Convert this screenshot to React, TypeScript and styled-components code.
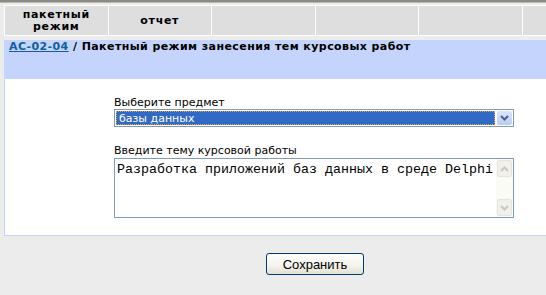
import React from 'react';
import styled, { createGlobalStyle } from 'styled-components';

const GlobalStyle = createGlobalStyle`
  html, body {
    margin: 0;
    padding: 0;
    background: #ececec;
    overflow: hidden;
  }
  body {
    font-family: "DejaVu Sans", Verdana, sans-serif;
    font-size: 11px;
    color: #000;
  }
`;

const Viewport = styled.div`
  width: 100%;
  height: 100vh;
  overflow: hidden;
`;

const Page = styled.div`
  width: 622px;
  padding-left: 4px;
`;

const TopStrip = styled.div`
  height: 4px;
  width: 630px;
  background: linear-gradient(#8b8a84 0, #8b8a84 2px, #b9b8b2 2px, #b9b8b2 3px, #ececec 3px);
`;

const Tabs = styled.div`
  margin-top: 1px;
  display: grid;
  grid-template-columns: repeat(6, 1fr);
  gap: 1px;
  padding: 1px;
  background: #fff;
`;

const Tab = styled.div`
  height: 29px;
  background: #dedede;
  display: flex;
  align-items: center;
  justify-content: center;
  text-align: center;
  font-weight: bold;
  font-size: 11px;
  line-height: 12px;
  letter-spacing: 0.7px;
  color: #000;
`;

const Panel = styled.div`
  margin-top: 4px;
  border: 1px solid #c4d4fc;
  border-top: none;
  background: #fff;
`;

const PanelHeader = styled.div`
  height: 39px;
  background: #c4d4fc;
  padding: 0 5px;
  margin-left: -1px;
  margin-right: -1px;
  font-weight: bold;
  line-height: 13px;
  letter-spacing: 0.42px;
`;

const Crumb = styled.a`
  color: #10609c;
  text-decoration: underline;
`;

const PanelBody = styled.div`
  padding: 17px 0 17px;
  display: flex;
  justify-content: center;
`;

const Form = styled.div`
  width: 400px;
  margin-left: -2px;
`;

const Label = styled.div<{ $gap?: number }>`
  line-height: 13px;
  margin-top: ${(p) => p.$gap ?? 0}px;
`;

const SelectBox = styled.div`
  height: 18px;
  box-sizing: border-box;
  border: 1px solid #7f9db9;
  display: flex;
  align-items: stretch;
  padding: 1px 1px 0 1px;
`;

const SelectValue = styled.div`
  flex: 1;
  margin-right: 2px;
  margin-bottom: 1px;
  background: #316ac5;
  color: #fff;
  line-height: 13px;
  padding-left: 2px;
  outline: 1px dotted #e8a030;
  outline-offset: -1px;
  border: 1px dotted #000;
`;

const DropButton = styled.div`
  width: 15px;
  margin-bottom: 1px;
  border-radius: 2px;
  background: linear-gradient(#dbe6fd, #b9cdf7);
  display: flex;
  align-items: center;
  justify-content: center;
`;

const TextBox = styled.div`
  margin-top: 1px;
  height: 60px;
  border: 1px solid #7f9db9;
  box-sizing: border-box;
  display: flex;
`;

const Area = styled.textarea`
  flex: 1;
  border: none;
  resize: none;
  outline: none;
  padding: 3px 2px;
  margin: 0;
  font-family: "Liberation Mono", "Courier New", monospace;
  font-size: 13.33px;
  line-height: 16px;
  color: #000;
  background: #fff;
  overflow: hidden;
`;

const ScrollBar = styled.div`
  width: 17px;
  background: #fbfbf6;
  display: flex;
  flex-direction: column;
  justify-content: space-between;
  padding: 1px 0;
`;

const ScrollBtn = styled.div`
  height: 15px;
  margin: 0 1px;
  border: 1px solid #e6e5dc;
  border-radius: 2px;
  background: #f1f0ea;
  display: flex;
  align-items: center;
  justify-content: center;
`;

const Actions = styled.div`
  display: flex;
  justify-content: center;
  padding-top: 17px;
`;

const SaveButton = styled.button`
  width: 98px;
  height: 22px;
  border: 1px solid #003c74;
  border-radius: 3px;
  background: linear-gradient(#ffffff, #f3f2ec 60%, #e3e0d4);
  font-family: "Liberation Sans", Arial, sans-serif;
  font-size: 13px;
  color: #000;
  padding: 0;
`;

const Chevron = ({ up, color }: { up?: boolean; color: string }) => (
  <svg width="9" height="6" viewBox="0 0 9 6">
    <path
      d={up ? 'M1 5 L4.5 1.5 L8 5' : 'M1 1 L4.5 4.5 L8 1'}
      fill="none"
      stroke={color}
      strokeWidth="2"
    />
  </svg>
);

export default function App() {
  return (
    <Viewport>
      <GlobalStyle />
      <TopStrip />
      <Page>
        <Tabs>
          <Tab>пакетный<br />режим</Tab>
          <Tab>отчет</Tab>
          <Tab />
          <Tab />
          <Tab />
          <Tab />
        </Tabs>
        <Panel>
          <PanelHeader>
            <Crumb href="#">АС-02-04</Crumb> / Пакетный режим занесения тем курсовых работ
          </PanelHeader>
          <PanelBody>
            <Form>
              <Label>Выберите предмет</Label>
              <SelectBox>
                <SelectValue>базы данных</SelectValue>
                <DropButton>
                  <Chevron color="#4d6185" />
                </DropButton>
              </SelectBox>
              <Label $gap={17}>Введите тему курсовой работы</Label>
              <TextBox>
                <Area readOnly defaultValue="Разработка приложений баз данных в среде Delphi" />
                <ScrollBar>
                  <ScrollBtn>
                    <Chevron up color="#c9c8c0" />
                  </ScrollBtn>
                  <ScrollBtn>
                    <Chevron color="#c9c8c0" />
                  </ScrollBtn>
                </ScrollBar>
              </TextBox>
            </Form>
          </PanelBody>
        </Panel>
        <Actions>
          <SaveButton>Сохранить</SaveButton>
        </Actions>
      </Page>
    </Viewport>
  );
}
